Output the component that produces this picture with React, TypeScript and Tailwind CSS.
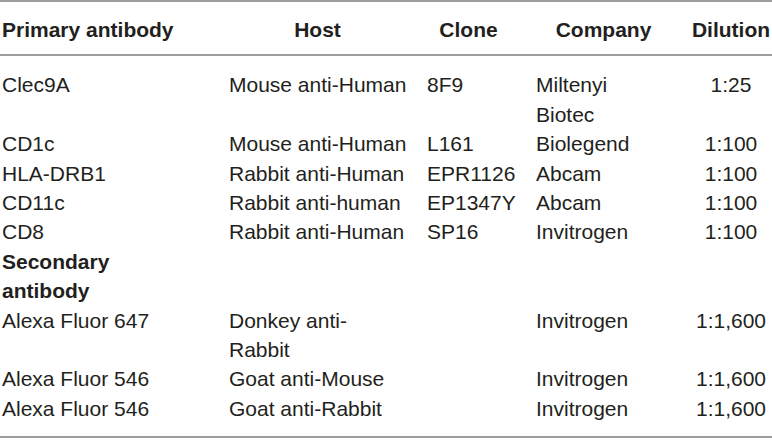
type Row = {
  name: React.ReactNode;
  host?: React.ReactNode;
  clone?: string;
  company?: React.ReactNode;
  dilution?: string;
  bold?: boolean;
};

const rows: Row[] = [
  { name: 'Clec9A', host: 'Mouse anti-Human', clone: '8F9', company: <>Miltenyi<br />Biotec</>, dilution: '1:25' },
  { name: 'CD1c', host: 'Mouse anti-Human', clone: 'L161', company: 'Biolegend', dilution: '1:100' },
  { name: 'HLA-DRB1', host: 'Rabbit anti-Human', clone: 'EPR1126', company: 'Abcam', dilution: '1:100' },
  { name: 'CD11c', host: 'Rabbit anti-human', clone: 'EP1347Y', company: 'Abcam', dilution: '1:100' },
  { name: 'CD8', host: 'Rabbit anti-Human', clone: 'SP16', company: 'Invitrogen', dilution: '1:100' },
  { name: <>Secondary<br />antibody</>, bold: true },
  { name: 'Alexa Fluor 647', host: <>Donkey anti-<br />Rabbit</>, company: 'Invitrogen', dilution: '1:1,600' },
  { name: 'Alexa Fluor 546', host: 'Goat anti-Mouse', company: 'Invitrogen', dilution: '1:1,600' },
  { name: 'Alexa Fluor 546', host: 'Goat anti-Rabbit', company: 'Invitrogen', dilution: '1:1,600' },
];

export default function App() {
  return (
    <div className="w-[772px] h-[440px] bg-white text-[#231f20] font-['Liberation_Sans',Arial,sans-serif] text-[21px] leading-[29.4px]">
      <table className="w-[772px] table-fixed border-collapse">
        <colgroup>
          <col className="w-[224px]" />
          <col className="w-[198px]" />
          <col className="w-[109px]" />
          <col className="w-[159px]" />
          <col className="w-[82px]" />
        </colgroup>
        <thead>
          <tr className="border-t-2 border-b-2 border-[#9d9d9d] font-bold">
            <th className="pt-[13px] pb-[10px] pl-[2px] text-left whitespace-nowrap">Primary antibody</th>
            <th className="pt-[13px] pb-[10px] pr-[11px] text-center">Host</th>
            <th className="pt-[13px] pb-[10px] pr-[16px] text-center">Clone</th>
            <th className="pt-[13px] pb-[10px] pr-[14px] text-center">Company</th>
            <th className="pt-[13px] pb-[10px] text-center whitespace-nowrap">Dilution</th>
          </tr>
        </thead>
        <tbody className="border-b-2 border-[#9d9d9d]">
          {rows.map((r, i) => {
            const pad = i === 0 ? 'pt-[14px]' : i === rows.length - 1 ? 'pb-[13px]' : '';
            return (
              <tr key={i} className="align-top">
                <td className={`${pad} pl-[2px] whitespace-nowrap ${r.bold ? 'font-bold' : ''}`}>{r.name}</td>
                <td className={`${pad} pl-[5px] whitespace-nowrap`}>{r.host}</td>
                <td className={`${pad} pl-[5px] whitespace-nowrap`}>{r.clone}</td>
                <td className={`${pad} pl-[5px] whitespace-nowrap`}>{r.company}</td>
                <td className={`${pad} text-center whitespace-nowrap`}>{r.dilution}</td>
              </tr>
            );
          })}
        </tbody>
      </table>
    </div>
  );
}
